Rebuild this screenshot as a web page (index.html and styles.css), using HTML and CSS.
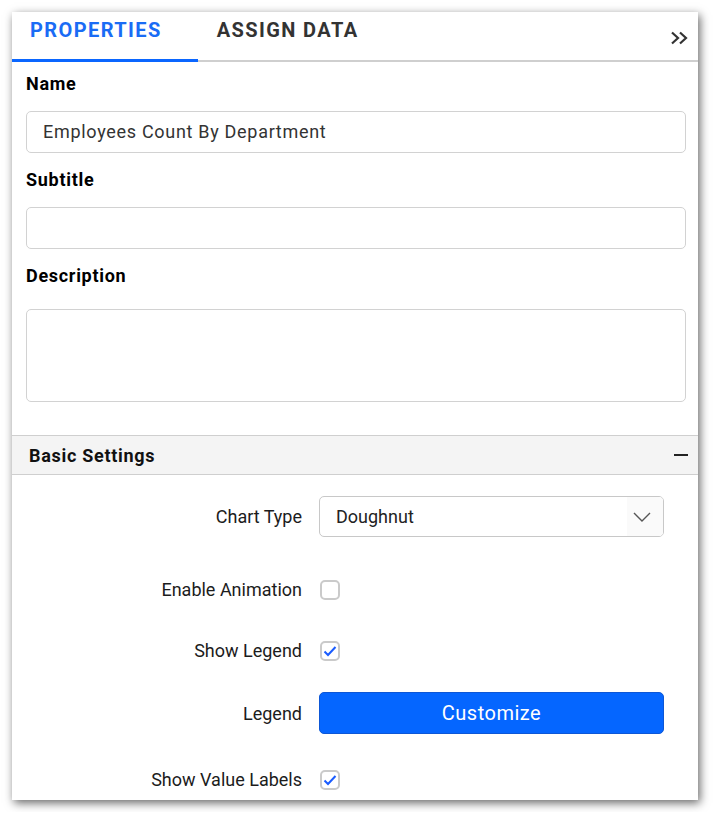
FILE: index.html
```html
<!DOCTYPE html>
<html>
<head>
<meta charset="utf-8">
<link rel="stylesheet" href="styles.css">
</head>
<body>
<div class="panel">
  <div class="tabs">
    <div class="tab active">PROPERTIES</div>
    <div class="tab">ASSIGN DATA</div>
    <div class="collapse">
      <svg width="20" height="14" viewBox="0 0 20 14"><path d="M2 1.5 L8 7 L2 12.5 M10 1.5 L16 7 L10 12.5" fill="none" stroke="#333" stroke-width="2.2"/></svg>
    </div>
  </div>
  <div class="form">
    <div class="label">Name</div>
    <div class="input">Employees Count By Department</div>
    <div class="label">Subtitle</div>
    <div class="input"></div>
    <div class="label desc">Description</div>
    <div class="textarea"></div>
  </div>
  <div class="section-head">
    <span>Basic Settings</span>
    <span class="minus"></span>
  </div>
  <div class="settings">
    <div class="row r1">
      <div class="rlabel">Chart Type</div>
      <div class="dropdown">
        <span>Doughnut</span>
        <span class="dd-icon"><svg width="18" height="10" viewBox="0 0 18 10"><path d="M1 1 L9 9 L17 1" fill="none" stroke="#555" stroke-width="1.4"/></svg></span>
      </div>
    </div>
    <div class="row r2">
      <div class="rlabel">Enable Animation</div>
      <div class="check"></div>
    </div>
    <div class="row r3">
      <div class="rlabel">Show Legend</div>
      <div class="check"><svg width="14" height="12" viewBox="0 0 14 12"><path d="M1.5 6.5 L5 10 L12.5 2" fill="none" stroke="#1a5cff" stroke-width="2"/></svg></div>
    </div>
    <div class="row r4">
      <div class="rlabel">Legend</div>
      <div class="button">Customize</div>
    </div>
    <div class="row r5">
      <div class="rlabel">Show Value Labels</div>
      <div class="check"><svg width="14" height="12" viewBox="0 0 14 12"><path d="M1.5 6.5 L5 10 L12.5 2" fill="none" stroke="#1a5cff" stroke-width="2"/></svg></div>
    </div>
  </div>
</div>
</body>
</html>
```

FILE: styles.css
```css
* { box-sizing: border-box; }
html, body { margin: 0; padding: 0; background: #fff; }
body { padding: 12px; font-family: Roboto, "Liberation Sans", sans-serif; }

.panel {
  width: 686px;
  height: 788px;
  background: #fff;
  overflow: hidden;
  box-shadow: 2px 3px 9px rgba(0, 0, 0, 0.6);
}

.tabs {
  display: flex;
  height: 50px;
  border-bottom: 2px solid #cfcfcf;
}
.tab {
  position: relative;
  padding: 6px 38px 0 18px;
  line-height: 24px;
  font-size: 20px;
  font-weight: 700;
  letter-spacing: 1.4px;
  color: #333;
}
.tab.active { padding-right: 36px; }
.tab + .tab { padding-left: 19px; }
.tab.active { color: #1a6cf5; }
.tab.active::after {
  content: "";
  position: absolute;
  left: 0; right: 0; bottom: -2px;
  height: 3px;
  background: #0a66ff;
}
.collapse {
  margin-left: auto;
  padding: 18px 8px 0 0;
}

.form { padding: 10px 12px 33px 14px; }
.label {
  font-size: 18px;
  font-weight: 700;
  letter-spacing: 0.7px;
  line-height: 24px;
  color: #000;
  margin-bottom: 15px;
}
.label.desc { margin-bottom: 21px; }
.input, .textarea {
  border: 1px solid #d2d2d2;
  border-radius: 5px;
  height: 42px;
  margin-bottom: 15px;
  padding: 0 16px;
  font-size: 18px;
  letter-spacing: 0.7px;
  line-height: 40px;
  color: #333;
}
.textarea { height: 93px; margin-bottom: 0; }

.section-head {
  display: flex;
  align-items: center;
  justify-content: space-between;
  height: 40px;
  background: #f4f4f4;
  border-top: 1px solid #cfcfcf;
  border-bottom: 1px solid #cfcfcf;
  padding: 0 10px 0 17px;
  font-size: 18px;
  font-weight: 700;
  letter-spacing: 0.7px;
  color: #111;
}
.minus { width: 14px; height: 2px; background: #222; }

.settings { padding-top: 21px; }
.row {
  display: flex;
  align-items: center;
  height: 41px;
}
.r2 { margin-top: 32px; }
.r3 { margin-top: 20px; }
.r4 { margin-top: 21px; height: 42px; }
.r5 { margin-top: 25px; }
.rlabel {
  width: 290px;
  text-align: right;
  font-size: 18px;
  color: #1c1c1c;
  margin-right: 17px;
}
.dropdown {
  width: 345px;
  height: 41px;
  border: 1px solid #c8c8c8;
  border-radius: 5px;
  display: flex;
  align-items: center;
  justify-content: space-between;
  font-size: 18px;
  color: #222;
  padding-left: 16px;
  overflow: hidden;
}
.dd-icon {
  width: 36px;
  height: 100%;
  background: #fafafa;
  display: flex;
  align-items: center;
  justify-content: flex-start;
  padding-left: 6px;
}
.check {
  width: 20px;
  height: 20px;
  border: 2px solid #cacaca;
  border-radius: 5px;
  margin-left: 1px;
  display: flex;
  align-items: center;
  justify-content: center;
}
.button {
  width: 345px;
  height: 42px;
  background: #0566ff;
  border: 1px solid #0d57d6;
  border-radius: 5px;
  color: #fff;
  font-size: 20px;
  letter-spacing: 0.5px;
  text-align: center;
  line-height: 40px;
}
```
